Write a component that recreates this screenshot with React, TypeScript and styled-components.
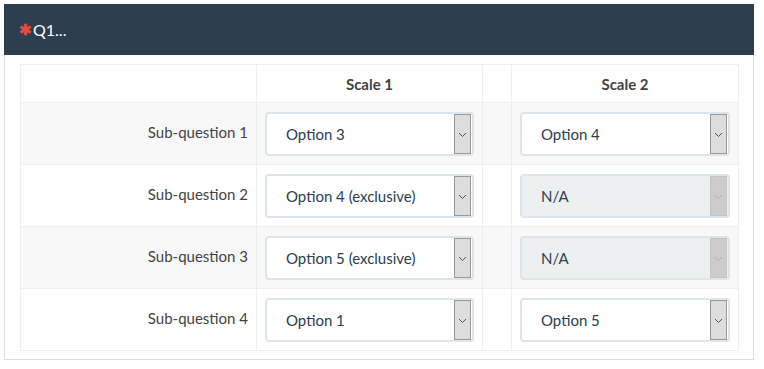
import React from 'react';
import styled, {createGlobalStyle} from "styled-components";

const GlobalStyle = createGlobalStyle`
    body {
        margin: 0;
        background: #fff;
        font-family: Lato, "Open Sans", sans-serif;
    }
`

type Cell = { value: string, disabled?: boolean }

const rows: { label: string, scale1: Cell, scale2: Cell }[] = [
    {label: "Sub-question 1", scale1: {value: "Option 3"}, scale2: {value: "Option 4"}},
    {label: "Sub-question 2", scale1: {value: "Option 4 (exclusive)"}, scale2: {value: "N/A", disabled: true}},
    {label: "Sub-question 3", scale1: {value: "Option 5 (exclusive)"}, scale2: {value: "N/A", disabled: true}},
    {label: "Sub-question 4", scale1: {value: "Option 1"}, scale2: {value: "Option 5"}},
]

const Dropdown = ({value, disabled}: Cell) => (
    <SelectBox disabled={disabled}>
        <SelectValue>{value}</SelectValue>
        <Arrow disabled={disabled}>
            <svg width="9" height="6" viewBox="0 0 9 6">
                <path d="M1 1 L4.5 4.5 L8 1" fill="none" stroke="currentColor" strokeWidth="1"/>
            </svg>
        </Arrow>
    </SelectBox>
)

export default function App() {
    return (
        <Page>
            <GlobalStyle/>
            <Panel>
                <Heading>
                    <Asterisk>✱</Asterisk>Q1...
                </Heading>
                <Body>
                    <Table>
                        <colgroup>
                            <col style={{width: 236}}/>
                            <col style={{width: 226}}/>
                            <col style={{width: 29}}/>
                            <col style={{width: 227}}/>
                        </colgroup>
                        <thead>
                        <tr>
                            <Th/>
                            <Th>Scale 1</Th>
                            <Th/>
                            <Th>Scale 2</Th>
                        </tr>
                        </thead>
                        <tbody>
                        {rows.map((r, i) => (
                            <Row key={r.label} striped={i % 2 === 0}>
                                <Label>{r.label}</Label>
                                <Td><Dropdown {...r.scale1}/></Td>
                                <Td/>
                                <Td><Dropdown {...r.scale2}/></Td>
                            </Row>
                        ))}
                        </tbody>
                    </Table>
                </Body>
            </Panel>
        </Page>
    );
}

const Page = styled.div`
    padding: 4px;
`

const Panel = styled.div`
    width: 750px;
    box-sizing: border-box;
    border: 1px solid #dddddd;
    border-top: none;
`

const Heading = styled.div`
    height: 51px;
    margin: 0 -1px;
    background: #2c3e50;
    color: #fff;
    font-size: 16px;
    display: flex;
    align-items: center;
    padding-left: 15px;
    box-sizing: border-box;
`

const Asterisk = styled.span`
    color: #e74c3c;
    font-size: 15px;
    font-weight: 700;
    margin-right: 1px;
`

const Body = styled.div`
    padding: 9px 15px 8px 15px;
`

const Table = styled.table`
    border-collapse: collapse;
    width: 718px;
    table-layout: fixed;
    font-size: 15px;
    color: #2c3e50;
`

const Th = styled.th`
    height: 37px;
    border: 1px solid #ecf0f1;
    font-weight: 700;
    font-size: 15px;
    color: #444;
    padding: 0;
`

const Row = styled.tr<{ striped: boolean }>`
    background: ${p => p.striped ? "#f8f8f8" : "#fff"};
`

const Td = styled.td`
    height: 61px;
    border: 1px solid #ecf0f1;
    padding: 0 8px;
    vertical-align: middle;
`

const Label = styled(Td)`
    height: 57px;
    text-align: right;
    color: #444;
    padding-right: 8px;
    padding-bottom: 4px;
`

const SelectBox = styled.div<{ disabled?: boolean }>`
    height: 44px;
    box-sizing: border-box;
    border: 2px solid #dce4ec;
    border-radius: 4px;
    background: ${p => p.disabled ? "#ecf0f1" : "#fff"};
    display: flex;
    align-items: center;
    padding: 0 1px 0 19px;
`

const SelectValue = styled.span`
    flex: 1;
    color: #2c3e50;
    font-size: 15px;
    white-space: nowrap;
`

const Arrow = styled.span<{ disabled?: boolean }>`
    width: 17px;
    height: 40px;
    box-sizing: border-box;
    border: 1px solid ${p => p.disabled ? "#c4c4c4" : "#999"};
    background: ${p => p.disabled ? "#cccccc" : "#dddddd"};
    color: ${p => p.disabled ? "#b0b0b0" : "#555"};
    display: flex;
    align-items: center;
    justify-content: center;
    padding-top: 2px;
`
